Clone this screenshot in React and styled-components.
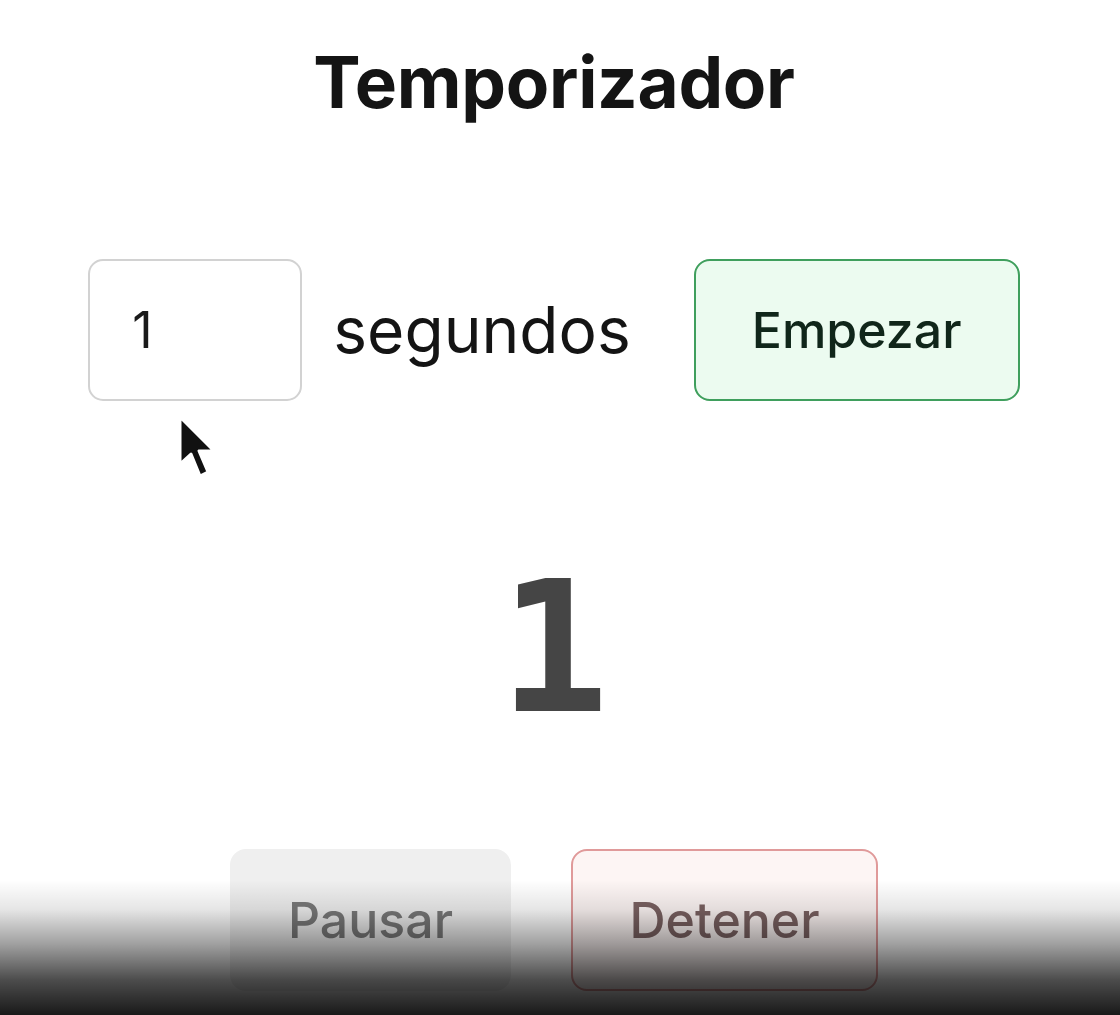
import React from 'react'
import styled, { createGlobalStyle } from 'styled-components'

const Global = createGlobalStyle`
  html, body {
    margin: 0;
    padding: 0;
    background: #ffffff;
    font-family: Inter, "Noto Sans", "Liberation Sans", sans-serif;
    overflow: hidden;
  }
`

const Page = styled.div`
  position: relative;
  width: 1120px;
  height: 1015px;
  overflow: hidden;
  background: #ffffff;
`

const Main = styled.div`
  width: 1108px;
  display: flex;
  flex-direction: column;
  align-items: center;
`

const Title = styled.h1`
  margin: 47px 0 0;
  font-size: 71px;
  font-weight: 700;
  line-height: 1;
  color: #141414;
  letter-spacing: -0.3px;
`

const Row = styled.div`
  margin-top: 141px;
  display: flex;
  align-items: center;
`

const NumberInput = styled.input`
  box-sizing: border-box;
  width: 214px;
  height: 142px;
  padding: 0 0 0 42px;
  border: 2px solid #d2d2d2;
  border-radius: 15px;
  background: #ffffff;
  font-family: Inter, "Noto Sans", sans-serif;
  font-size: 50px;
  color: #1a1a1a;
  outline: none;
`

const Unit = styled.span`
  margin: 0 63px 0 31px;
  font-size: 64px;
  color: #141414;
  line-height: 1;
`

const Button = styled.button`
  box-sizing: border-box;
  width: ${(p) => p.$w}px;
  height: 142px;
  border-radius: 16px;
  border: 2px solid ${(p) => p.$border};
  background: ${(p) => p.$bg};
  color: ${(p) => p.$color};
  font-family: Inter, "Noto Sans", sans-serif;
  font-size: 50px;
  font-weight: 500;
  cursor: pointer;
  padding: 0;
`

const Count = styled.div`
  margin-top: 156px;
  font-family: "DejaVu Sans Mono", "Liberation Mono", monospace;
  font-weight: 700;
  font-size: 182px;
  line-height: 1;
  color: #454545;
`

const Actions = styled.div`
  margin-top: 110px;
  display: flex;
  gap: 60px;
`

const Shade = styled.div`
  position: absolute;
  left: 0;
  right: 0;
  bottom: 0;
  height: 135px;
  pointer-events: none;
  background: linear-gradient(
    to bottom,
    rgba(0, 0, 0, 0) 0%,
    rgba(0, 0, 0, 0.1) 22%,
    rgba(0, 0, 0, 0.38) 48%,
    rgba(0, 0, 0, 0.7) 74%,
    rgba(0, 0, 0, 0.9) 100%
  );
`

const Pointer = styled.svg`
  position: absolute;
  left: 176px;
  top: 414px;
  width: 44px;
  height: 68px;
  pointer-events: none;
`

const App = () => {
  return (
    <Page>
      <Global />
      <Main>
        <Title>Temporizador</Title>
        <Row>
          <NumberInput type="number" defaultValue={1} />
          <Unit>segundos</Unit>
          <Button $w={326} $border="#3f9f5d" $bg="#ecfbf0" $color="#10261a">
            Empezar
          </Button>
        </Row>
        <Count>1</Count>
        <Actions>
          <Button $w={281} $border="#efefef" $bg="#efefef" $color="#7a7a7a">
            Pausar
          </Button>
          <Button $w={307} $border="#e09a9a" $bg="#fdf5f4" $color="#7b6262">
            Detener
          </Button>
        </Actions>
      </Main>
      <Shade />
      <Pointer viewBox="0 0 44 68">
        <path
          d="M4 3 L4 50 L15 40 L24 62 L32 58 L23 37 L38 37 Z"
          fill="#111"
          stroke="#fff"
          strokeWidth="3"
          strokeLinejoin="round"
        />
      </Pointer>
    </Page>
  )
}

export default App
